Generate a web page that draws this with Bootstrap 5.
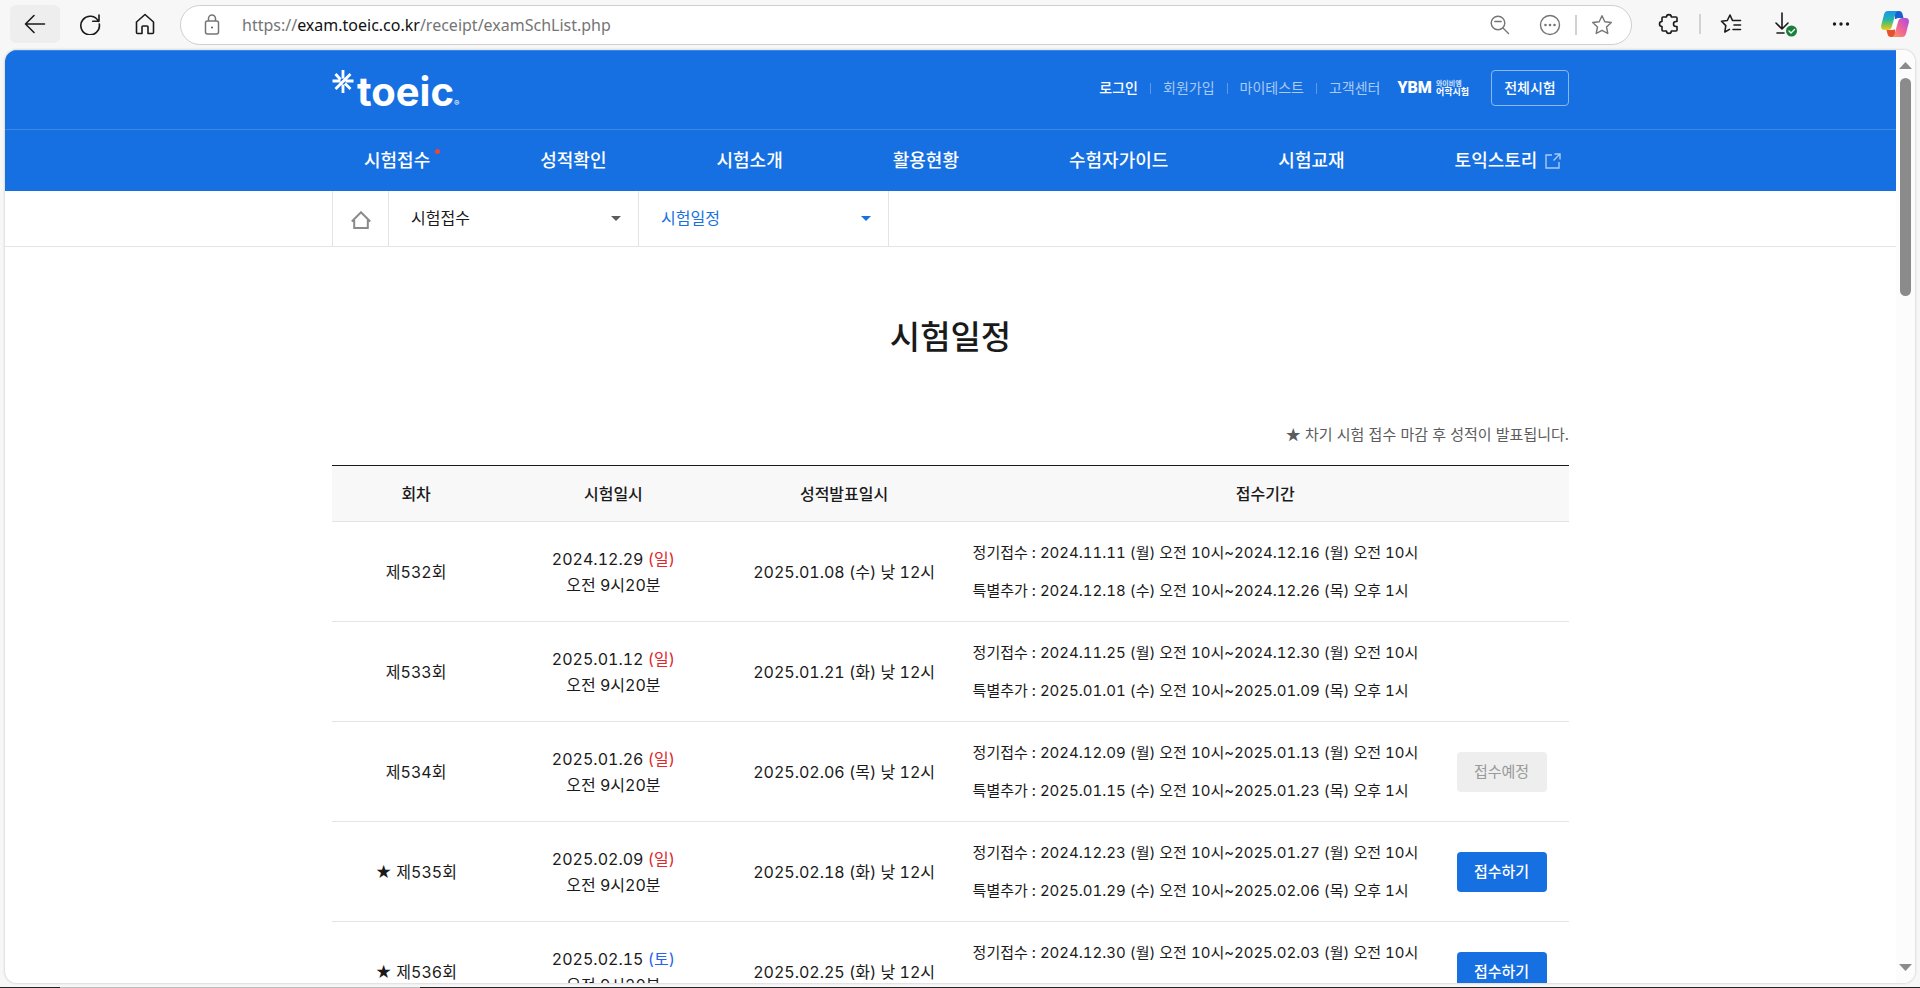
<!DOCTYPE html>
<html lang="ko">
<head>
<meta charset="utf-8">
<meta name="viewport" content="width=device-width, initial-scale=1">
<title>시험일정 | TOEIC</title>
<link href="https://cdn.jsdelivr.net/npm/bootstrap@5.3.0/dist/css/bootstrap.min.css" rel="stylesheet">
<style>
:root { --toeic: #1770e2; --line: #e4e4e4; }
body { font: 16px/26px Inter, "Noto Sans CJK KR", sans-serif; font-variant-numeric: tabular-nums; background: #f7f7f7; color: #1a1a1a; }
a { color: inherit; text-decoration: none; }
svg { display: block; flex: none; }

/* Browser toolbar */
.tool-bar { height: 50px; padding: 5px 0 0 10px; }
.tool-set { gap: 5px; }
.tool-btn { width: 50px; height: 38px; border: 0; background: none; border-radius: 6px; padding: 0; display: flex; flex: none; align-items: center; justify-content: center; color: #1b1b1b; }
.tool-btn.lit { background: #eee; }
.address { height: 40px; border: 1px solid #cfcfcf; border-radius: 20px; background: #fff; margin: 0 12px 0 10px; padding: 0 4px 0 20px; }
.address .tool-btn { color: #757575; }
.address .lock { width: 22px; }
.url { font: 16px/24px "Noto Sans", sans-serif; color: #757575; margin-left: 19px; }
.url b { font-weight: 400; color: #111; }
.v-rule { width: 2px; height: 20px; background: #d2d2d2; flex: none; }
.copilot { width: 48px; margin-right: 1px; }

/* Page window and its scroll bar */
.page-frame { margin: 0 5px 4px; border-radius: 12px; background: #fff; box-shadow: 0 0 2px 1px #dcdcdc; }
.scroll-rail { width: 19px; background: #fcfcfc; padding: 12px 0; }
.scroll-thumb { width: 11px; height: 218px; border-radius: 6px; background: #8b8b8b; margin-top: 9px; }
.task-edge { height: 1px; background: #222; padding-left: 60px; }
.task-edge i { width: 360px; background: #bcbcbc; }

/* Site header */
.inner { width: 100%; max-width: 1237px; margin: 0 auto; }
.site-head { background: var(--toeic); color: #fff; border-top: 1px solid #3c87e8; }
.brand-row { height: 78px; }
.brand { gap: 3px; padding-top: 14px; }
.brand-word { font: 700 40px/44px Inter, sans-serif; }
.brand-word small { font-size: 8px; font-weight: 400; }
.util { font-size: 14px; gap: 12px; color: #a9cbf5; padding-bottom: 4px; }
.util .on { color: #fff; font-weight: 500; }
.util i { width: 1px; height: 11px; background: #5c9bec; }
.ybm { font: 900 16px/20px Roboto, sans-serif; color: #fff; margin-left: 5px; gap: 4px; }
.ybm span { font: 700 9px/10px "Noto Sans CJK KR", sans-serif; }
.ybm span small { font-size: 7px; display: block; line-height: 8px; color: #d2e3fa; }
.all-tests { width: 78px; height: 36px; border: 1px solid #8bb8f1; border-radius: 4px; background: none; color: #fff; font-size: 14px; font-weight: 500; padding: 0; margin-left: 10px; }
.main-nav { border-top: 1px solid #3c87e8; }
.main-nav ul { height: 61px; gap: 110px; padding-left: 32px; font-size: 18px; font-weight: 500; white-space: nowrap; }
.new-dot::after { content: ""; position: absolute; top: -1px; right: -10px; width: 5px; height: 5px; border-radius: 50%; background: #f04438; }

/* Breadcrumb */
.crumbs { border-bottom: 1px solid var(--line); }
.crumbs .inner { height: 55px; }
.crumb-home { width: 57px; border: solid var(--line); border-width: 0 1px; display: flex; align-items: center; justify-content: center; padding-top: 2px; }
.crumb { width: 250px; border-right: 1px solid var(--line); position: relative; }
.crumb select { width: 100%; height: 100%; border: 0; background: none; appearance: none; padding: 0 40px 2px 22px; color: #1a1a1a; }
.crumb::after { content: ""; position: absolute; right: 17px; top: 25px; border: 5px solid transparent; border-top-color: #5c5c5c; border-bottom: 0; }
.crumb.now select { color: var(--toeic); }
.crumb.now::after { border-top-color: var(--toeic); }

/* Schedule */
.page-title { font-size: 33px; line-height: 48px; font-weight: 500; padding-top: 66px; margin: 0; }
.star-note { font: 15px/24px "Noto Sans CJK KR", sans-serif; color: #5c5c5c; margin: 61px 0 19px; }
.schedule { width: 100%; table-layout: fixed; border-collapse: separate; border-spacing: 0; border-top: 1px solid #1a1a1a; text-align: center; }
.schedule th, .schedule td { border-bottom: 1px solid var(--line); }
.schedule th { height: 56px; background: #f8f8f8; font-weight: 500; }
.schedule td { height: 100px; padding-bottom: 1px; }
.schedule .period { font-size: 15px; line-height: 38px; text-align: left; padding-left: 11px; white-space: nowrap; }
.sun { color: #e0262b; }
.sat { color: #2a62f0; }
.apply { width: 90px; height: 40px; border: 0; border-radius: 4px; background: var(--toeic); color: #fff; font-size: 15px; font-weight: 500; padding: 0; }
.apply:disabled { background: #eee; color: #999; font-weight: 400; }
</style>
</head>
<body class="vh-100 d-flex flex-column overflow-hidden">

<div class="tool-bar d-flex align-items-start flex-shrink-0">
  <div class="tool-set d-flex">
    <button class="tool-btn lit" aria-label="뒤로"><svg width="22" height="20" viewBox="0 0 22 20" fill="none" stroke="currentColor" stroke-width="1.6" stroke-linecap="round" stroke-linejoin="round"><path d="M20.500 10H1.500M10 1.500 1.500 10l8.500 8.500"/></svg></button>
    <button class="tool-btn" aria-label="새로 고침"><svg width="22" height="22" viewBox="0 0 22 22" fill="none" stroke="currentColor" stroke-width="1.600" stroke-linecap="round" stroke-linejoin="round"><path d="M19.500 8.500A9.300 9.300 0 1 0 20.300 11M20 2v6.300h-6.300"/></svg></button>
    <button class="tool-btn" aria-label="홈"><svg width="20" height="22" viewBox="0 0 20 22" fill="none" stroke="currentColor" stroke-width="1.600" stroke-linejoin="round"><path d="M1.500 9 10 1.500 18.500 9v10.500a1 1 0 0 1-1 1H13V14a1 1 0 0 0-1-1H8a1 1 0 0 0-1 1v6.500H2.500a1 1 0 0 1-1-1z"/></svg></button>
  </div>
  <div class="address d-flex align-items-center flex-grow-1">
    <svg class="lock" height="22" viewBox="0 0 22 22" fill="none" stroke="#757575" stroke-width="1.500"><rect x="4.500" y="7" width="13" height="13" rx="2"/><path d="M7.500 7V4.500a3.500 3.500 0 0 1 7 0V7"/><circle cx="11" cy="13.500" r="1" fill="#555" stroke="none"/></svg>
    <div class="url flex-grow-1">https://<b>exam.toeic.co.kr</b>/receipt/examSchList.php</div>
    <button class="tool-btn" aria-label="축소"><svg width="20" height="20" viewBox="0 0 20 20" fill="none" stroke="currentColor" stroke-width="1.400" stroke-linecap="round"><circle cx="8" cy="8" r="6.800"/><path d="m13 13 5.500 5.500M4.800 6.500h6.400"/></svg></button>
    <button class="tool-btn" aria-label="더 보기"><svg width="22" height="22" viewBox="0 0 22 22" fill="none" stroke="currentColor" stroke-width="1.400"><circle cx="11" cy="11" r="9.500"/><g fill="currentColor" stroke="none"><circle cx="6.500" cy="11" r="1.300"/><circle cx="11" cy="11" r="1.300"/><circle cx="15.500" cy="11" r="1.300"/></g></svg></button>
    <span class="v-rule"></span>
    <button class="tool-btn" aria-label="즐겨찾기에 추가"><svg width="22" height="22" viewBox="0 0 22 22" fill="none" stroke="currentColor" stroke-width="1.400" stroke-linejoin="round"><path d="m11 1.700 2.800 6 6.500.8-4.800 4.500 1.300 6.500-5.800-3.200-5.800 3.200L6.500 13 1.700 8.500l6.500-.8z"/></svg></button>
  </div>
  <div class="tool-set d-flex align-items-center">
    <button class="tool-btn" aria-label="확장"><svg width="22" height="22" viewBox="0 0 22 22" fill="none" stroke="currentColor" stroke-width="1.600" stroke-linejoin="round"><path d="M5 4h3.500a2.400 2.400 0 0 1 4.800 0H18a1 1 0 0 1 1 1v3.500h-1a2.500 2.500 0 0 0 0 5h1V17a1 1 0 0 1-1 1h-4.700a2.400 2.400 0 0 1-4.800 0H5a1 1 0 0 1-1-1v-3.500a2.500 2.500 0 0 1 0-5V5a1 1 0 0 1 1-1z"/></svg></button>
    <span class="v-rule"></span>
    <button class="tool-btn" aria-label="즐겨찾기"><svg width="22" height="22" viewBox="0 0 22 22" fill="none" stroke="currentColor" stroke-width="1.600" stroke-linecap="round" stroke-linejoin="round"><path d="M12.500 7.500 10 2 7.300 7.500 1.500 8.300l4.300 4.300-1 6.400 4.700-2.600M12.500 7.500h8M14 12h6.500M13 16.500h7.500"/></svg></button>
    <button class="tool-btn" aria-label="다운로드"><svg width="24" height="26" viewBox="0 0 24 26" fill="none" stroke="currentColor" stroke-width="1.600" stroke-linecap="round" stroke-linejoin="round"><path d="M8 2v15.500M2 12l6 6 6-6M3 22h7"/><circle cx="17.500" cy="20" r="5.500" fill="#188038" stroke="none"/><path d="m15 20 2 2 3.500-3.500" stroke="#fff" stroke-width="1.300"/></svg></button>
    <button class="tool-btn" aria-label="설정 및 기타"><svg width="18" height="6" viewBox="0 0 18 6" fill="currentColor"><circle cx="2.500" cy="3" r="1.700"/><circle cx="9" cy="3" r="1.700"/><circle cx="15.500" cy="3" r="1.700"/></svg></button>
    <button class="tool-btn copilot" aria-label="Copilot"><svg width="28" height="26" viewBox="0 0 28 26">
      <defs>
        <linearGradient id="cool" x1="0" y1="0" x2="0" y2="1"><stop offset="0" stop-color="#1597ea"/><stop offset=".45" stop-color="#27b3ad"/><stop offset=".75" stop-color="#8cc63f"/><stop offset="1" stop-color="#f7c51e"/></linearGradient>
        <linearGradient id="warm" x1="1" y1="0" x2="0" y2="1"><stop offset="0" stop-color="#a44be8"/><stop offset=".5" stop-color="#f0629a"/><stop offset="1" stop-color="#fba351"/></linearGradient>
      </defs>
      <path d="M14 0h4c2 0 3 1 3.500 3l1 4h-5c-2 0-3 1-3.500 3z" fill="#1660cf"/>
      <path d="M14 26h-4c-2 0-3-1-3.500-3l-1-4h5c2 0 3-1 3.500-3z" fill="#e8512f"/>
      <path d="M7 0h11c-2 0-3 1-3.600 3L11 15c-.8 3-2 4-4.500 4H3.500C.5 19-.4 17 .3 14L3 3.500C3.600 1 5 0 7 0z" fill="url(#cool)"/>
      <path d="M21 26H10c2 0 3-1 3.600-3L17 11c.8-3 2-4 4.500-4h3c3 0 3.900 2 3.200 5L25 22.500c-.6 2.500-2 3.500-4 3.500z" fill="url(#warm)"/>
      <path d="M14 8h3.500L14 18.500h-3.500z" fill="#fff"/>
    </svg></button>
  </div>
</div>

<div class="page-frame d-flex flex-grow-1 overflow-hidden">
  <div class="flex-grow-1 overflow-hidden">
    <header class="site-head">
      <div class="brand-row inner d-flex align-items-center justify-content-between">
        <a href="#" class="brand d-flex" aria-label="toeic">
          <svg width="22" height="24" viewBox="0 0 22 24" stroke="#fff" stroke-width="2.800" fill="none"><path d="M11 0v8.500M11 14.500V23M.5 11h8M13.500 11h8M3.500 4l5 5.500M18.500 4 3.500 19M13 13.500l5.500 5.500"/></svg>
          <span class="brand-word">toeic<small>®</small></span>
        </a>
        <div class="util d-flex align-items-center">
          <a href="#" class="on">로그인</a><i></i><a href="#">회원가입</a><i></i><a href="#">마이테스트</a><i></i><a href="#">고객센터</a>
          <a href="#" class="ybm d-flex align-items-center">YBM<span><small>와이비엠</small>어학시험</span></a>
          <button class="all-tests">전체시험</button>
        </div>
      </div>
      <nav class="main-nav">
        <ul class="inner list-unstyled d-flex align-items-center">
          <li><a href="#" class="new-dot position-relative">시험접수</a></li>
          <li><a href="#">성적확인</a></li>
          <li><a href="#">시험소개</a></li>
          <li><a href="#">활용현황</a></li>
          <li><a href="#">수험자가이드</a></li>
          <li><a href="#">시험교재</a></li>
          <li><a href="#" class="d-flex align-items-center gap-2">토익스토리<svg width="16" height="16" viewBox="0 0 16 16" fill="none" stroke="#a9cbf5" stroke-width="1.400"><path d="M7 2H1v13h13V9M9.500 1H15v5.500M15 1 8.500 7.500"/></svg></a></li>
        </ul>
      </nav>
    </header>

    <div class="crumbs">
      <div class="inner d-flex">
        <a href="#" class="crumb-home" aria-label="홈"><svg width="20" height="18" viewBox="0 0 20 18" fill="none" stroke="#8a8a8a" stroke-width="2"><path d="M.8 10.500 10 1.300l9.200 9.200M3.200 9v8h13.600V9"/></svg></a>
        <div class="crumb"><select aria-label="메뉴"><option>시험접수</option></select></div>
        <div class="crumb now"><select aria-label="하위 메뉴"><option>시험일정</option></select></div>
      </div>
    </div>

    <main class="inner">
      <h1 class="page-title text-center">시험일정</h1>
      <p class="star-note text-end">★ 차기 시험 접수 마감 후 성적이 발표됩니다.</p>
      <table class="schedule">
        <colgroup><col style="width:13.6%"><col style="width:18.3%"><col style="width:19%"><col style="width:38.2%"><col style="width:10.9%"></colgroup>
        <thead><tr><th>회차</th><th>시험일시</th><th>성적발표일시</th><th colspan="2">접수기간</th></tr></thead>
        <tbody>
          <tr><td>제532회</td><td>2024.12.29 <span class="sun">(일)</span><br>오전 9시20분</td><td>2025.01.08 (수) 낮 12시</td><td class="period">정기접수 : 2024.11.11 (월) 오전 10시~2024.12.16 (월) 오전 10시<br>특별추가 : 2024.12.18 (수) 오전 10시~2024.12.26 (목) 오후 1시</td><td></td></tr>
          <tr><td>제533회</td><td>2025.01.12 <span class="sun">(일)</span><br>오전 9시20분</td><td>2025.01.21 (화) 낮 12시</td><td class="period">정기접수 : 2024.11.25 (월) 오전 10시~2024.12.30 (월) 오전 10시<br>특별추가 : 2025.01.01 (수) 오전 10시~2025.01.09 (목) 오후 1시</td><td></td></tr>
          <tr><td>제534회</td><td>2025.01.26 <span class="sun">(일)</span><br>오전 9시20분</td><td>2025.02.06 (목) 낮 12시</td><td class="period">정기접수 : 2024.12.09 (월) 오전 10시~2025.01.13 (월) 오전 10시<br>특별추가 : 2025.01.15 (수) 오전 10시~2025.01.23 (목) 오후 1시</td><td><button class="apply" disabled>접수예정</button></td></tr>
          <tr><td>★ 제535회</td><td>2025.02.09 <span class="sun">(일)</span><br>오전 9시20분</td><td>2025.02.18 (화) 낮 12시</td><td class="period">정기접수 : 2024.12.23 (월) 오전 10시~2025.01.27 (월) 오전 10시<br>특별추가 : 2025.01.29 (수) 오전 10시~2025.02.06 (목) 오후 1시</td><td><button class="apply">접수하기</button></td></tr>
          <tr><td>★ 제536회</td><td>2025.02.15 <span class="sat">(토)</span><br>오전 9시20분</td><td>2025.02.25 (화) 낮 12시</td><td class="period">정기접수 : 2024.12.30 (월) 오전 10시~2025.02.03 (월) 오전 10시<br>&nbsp;</td><td><button class="apply">접수하기</button></td></tr>
        </tbody>
      </table>
    </main>
  </div>
  <div class="scroll-rail d-flex flex-column align-items-center flex-shrink-0">
    <svg width="13" height="7" viewBox="0 0 13 7" fill="#8b8b8b"><path d="M0 7 6.500 0 13 7z"/></svg>
    <div class="scroll-thumb"></div>
    <svg class="mt-auto" width="13" height="7" viewBox="0 0 13 7" fill="#8b8b8b"><path d="M0 0h13L6.500 7z"/></svg>
  </div>
</div>
<div class="task-edge d-flex flex-shrink-0"><i></i></div>

</body>
</html>
